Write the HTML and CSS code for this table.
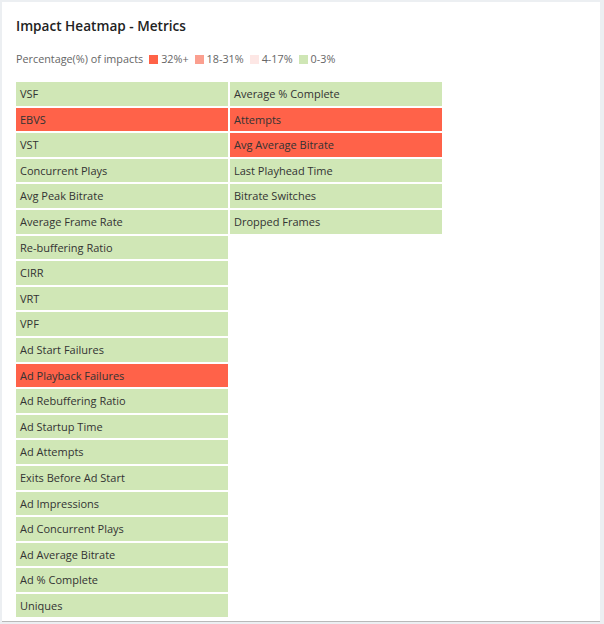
FILE: index.html
```html
<!DOCTYPE html>
<html>
<head>
<meta charset="utf-8">
<link rel="stylesheet" href="styles.css">
</head>
<body>
<div class="card">
  <h1 class="title">Impact Heatmap - Metrics</h1>
  <div class="legend">
    <span class="legend-label">Percentage(%) of impacts</span>
    <span class="legend-item"><span class="swatch s1"></span>32%+</span>
    <span class="legend-item"><span class="swatch s2"></span>18-31%</span>
    <span class="legend-item"><span class="swatch s3"></span>4-17%</span>
    <span class="legend-item"><span class="swatch s4"></span>0-3%</span>
  </div>
  <div class="heatmap">
    <div class="column">
      <div class="cell low">VSF</div>
      <div class="cell high">EBVS</div>
      <div class="cell low">VST</div>
      <div class="cell low">Concurrent Plays</div>
      <div class="cell low">Avg Peak Bitrate</div>
      <div class="cell low">Average Frame Rate</div>
      <div class="cell low">Re-buffering Ratio</div>
      <div class="cell low">CIRR</div>
      <div class="cell low">VRT</div>
      <div class="cell low">VPF</div>
      <div class="cell low">Ad Start Failures</div>
      <div class="cell high">Ad Playback Failures</div>
      <div class="cell low">Ad Rebuffering Ratio</div>
      <div class="cell low">Ad Startup Time</div>
      <div class="cell low">Ad Attempts</div>
      <div class="cell low">Exits Before Ad Start</div>
      <div class="cell low">Ad Impressions</div>
      <div class="cell low">Ad Concurrent Plays</div>
      <div class="cell low">Ad Average Bitrate</div>
      <div class="cell low">Ad % Complete</div>
      <div class="cell low">Uniques</div>
    </div>
    <div class="column">
      <div class="cell low">Average % Complete</div>
      <div class="cell high">Attempts</div>
      <div class="cell high">Avg Average Bitrate</div>
      <div class="cell low">Last Playhead Time</div>
      <div class="cell low">Bitrate Switches</div>
      <div class="cell low">Dropped Frames</div>
    </div>
  </div>
</div>
</body>
</html>
```

FILE: styles.css
```css
html, body {
  margin: 0;
  padding: 0;
}
body {
  background: #eceff2;
  width: 604px;
  height: 624px;
  overflow: hidden;
  font-family: "Open Sans", "Noto Sans", "Liberation Sans", sans-serif;
  color: #333333;
}
.card {
  margin: 2px 0 0 2px;
  width: 598px;
  height: 620px;
  background: #ffffff;
  border-bottom: 1px solid #b9b9b9;
  box-sizing: border-box;
  padding: 14px 14px 0 14px;
}
.title {
  margin: 0;
  font-size: 13.6px;
  font-weight: 600;
  color: #222222;
  line-height: 20px;
}
.legend {
  margin-top: 15px;
  display: flex;
  align-items: center;
  font-size: 10.8px;
  color: #666666;
  line-height: 16px;
}
.legend-label {
  margin-right: 6px;
}
.legend-item {
  display: flex;
  align-items: center;
  margin-right: 6px;
}
.swatch {
  width: 9px;
  height: 9px;
  margin-right: 3px;
}
.s1 { background: #ff6247; }
.s2 { background: #fb9f8f; }
.s3 { background: #fde7e5; }
.s4 { background: #cfe6b5; }
.heatmap {
  margin-top: 15px;
  display: flex;
  gap: 2px;
}
.column {
  width: 212px;
  display: flex;
  flex-direction: column;
  gap: 2px;
}
.cell {
  height: 23.6px;
  box-sizing: border-box;
  padding-left: 4px;
  font-size: 11px;
  line-height: 23.6px;
  color: #333333;
  white-space: nowrap;
}
.low { background: #d0e7b6; }
.high { background: #ff6249; }
```
